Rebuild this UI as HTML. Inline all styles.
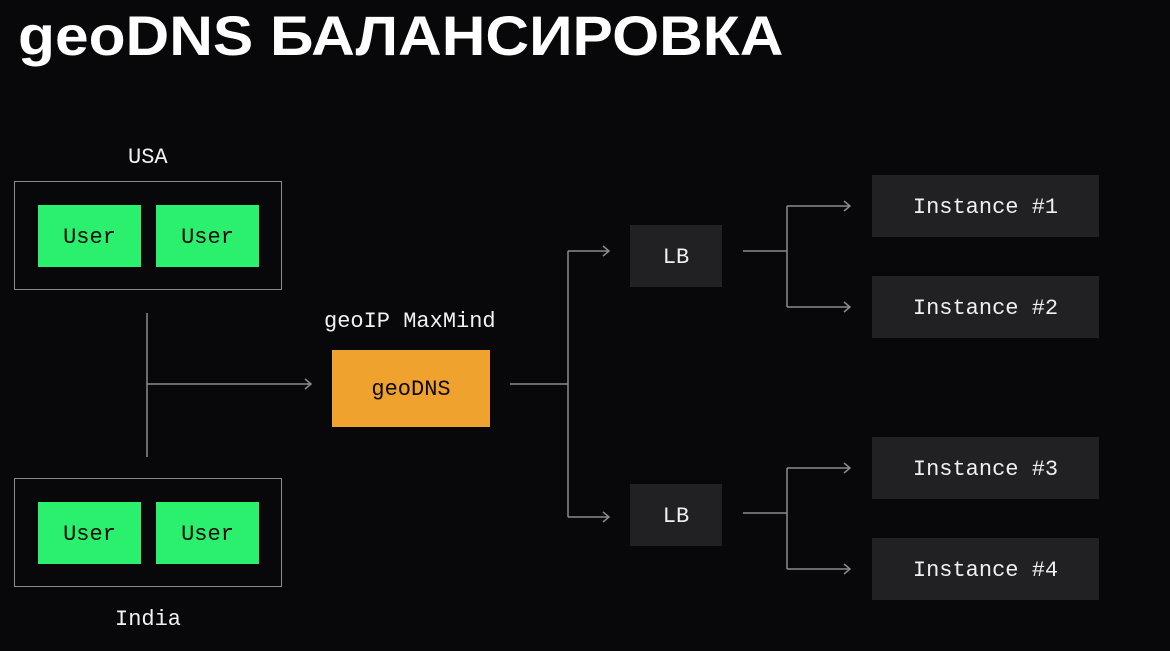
<!DOCTYPE html><html><head><meta charset="utf-8"><style>
body{margin:0;width:1170px;height:651px;background:#08080a;position:relative;overflow:hidden;font-family:"Liberation Mono",monospace;}
.t{position:absolute;left:18px;top:3px;color:#fff;font:bold 56px "Liberation Sans",sans-serif;white-space:nowrap;transform-origin:0 0;transform:scaleX(1.08);}
.b{position:absolute;display:flex;align-items:center;justify-content:center;font-size:22px;color:#0b0b0b;padding-top:2px;box-sizing:border-box;}
.g{background:#2af06e}.o{background:#f0a22e}.d{background:#212124;color:#f0f0f0}
.fr{position:absolute;border:1.5px solid #8a8a8a;}
.l{position:absolute;color:#f2f2f2;font-size:22px;}
</style></head><body>
<div class="t">geoDNS БАЛАНСИРОВКА</div>
<div class="l" style="left:128px;top:145px">USA</div>
<div class="l" style="left:115px;top:607px">India</div>
<div class="l" style="left:324px;top:309px">geoIP MaxMind</div>
<div class="fr" style="left:14px;top:181px;width:266px;height:107px"></div>
<div class="fr" style="left:14px;top:478px;width:266px;height:107px"></div>
<div class="b g" style="left:38px;top:205px;width:103px;height:62px">User</div>
<div class="b g" style="left:156px;top:205px;width:103px;height:62px">User</div>
<div class="b g" style="left:38px;top:502px;width:103px;height:62px">User</div>
<div class="b g" style="left:156px;top:502px;width:103px;height:62px">User</div>
<div class="b o" style="left:332px;top:350px;width:158px;height:77px">geoDNS</div>
<div class="b d" style="left:630px;top:225px;width:92px;height:62px">LB</div>
<div class="b d" style="left:630px;top:484px;width:92px;height:62px">LB</div>
<div class="b d" style="left:872px;top:175px;width:227px;height:62px">Instance #1</div>
<div class="b d" style="left:872px;top:276px;width:227px;height:62px">Instance #2</div>
<div class="b d" style="left:872px;top:437px;width:227px;height:62px">Instance #3</div>
<div class="b d" style="left:872px;top:538px;width:227px;height:62px">Instance #4</div>
<svg width="1170" height="651" style="position:absolute;left:0;top:0" fill="none" stroke="#8a8a8a" stroke-width="1.5">
<path d="M147 313V457M147 384H311M305 379l6 5-6 5"/>
<path d="M510 384H568M568 251V517M568 251H609M568 517H609M603 246l6 5-6 5M603 512l6 5-6 5"/>
<path d="M743 251H787M787 206V307M787 206H850M787 307H850M844 201l6 5-6 5M844 302l6 5-6 5"/>
<path d="M743 513H787M787 468V569M787 468H850M787 569H850M844 463l6 5-6 5M844 564l6 5-6 5"/>
</svg>
</body></html>
